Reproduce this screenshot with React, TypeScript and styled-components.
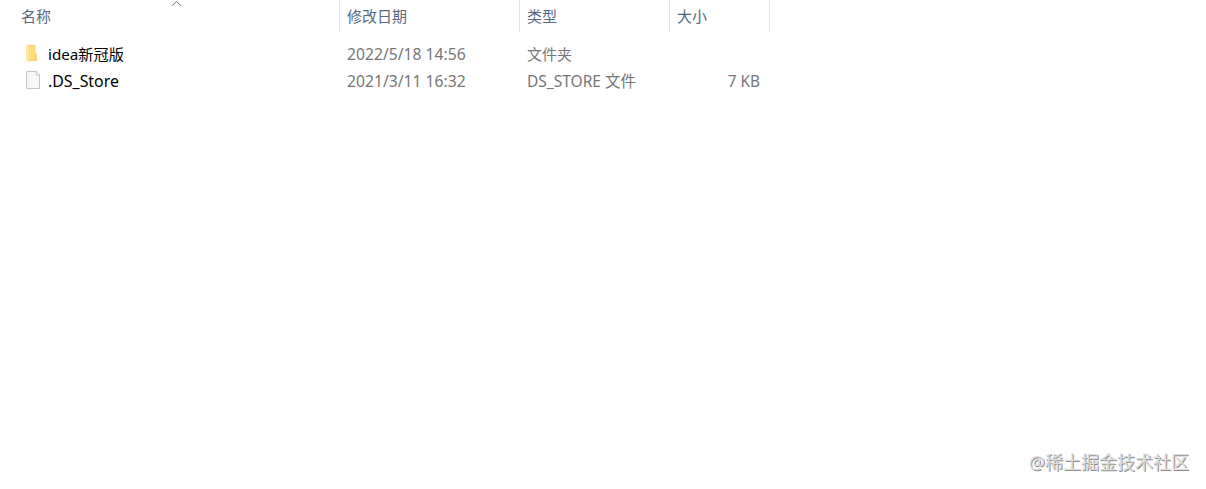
import React from "react";
import styled, { createGlobalStyle } from "styled-components";

const GlobalStyle = createGlobalStyle`
  body {
    margin: 0;
    background: #fff;
    font-family: "Noto Sans", "Noto Sans CJK SC", sans-serif;
    font-size: 15px;
  }
`;

const Page = styled.div`
  display: flex;
  flex-direction: column;
  height: 489px;
  box-sizing: border-box;
  overflow: hidden;
`;

const Row = styled.div`
  display: grid;
  grid-template-columns: 340px 180px 150px 100px;
  height: 27px;
  line-height: 27px;
  color: #767676;
`;

const HeaderRow = styled(Row)`
  height: 32px;
  line-height: 32px;
  margin-bottom: 9px;
  color: #56677f;
`;

const HeaderCell = styled.div<{ $indent?: number }>`
  position: relative;
  box-sizing: border-box;
  padding-left: ${(props) => props.$indent ?? 7}px;
  border-right: 1px solid #e5e5e5;
  white-space: nowrap;
`;

const SortArrow = styled.svg`
  position: absolute;
  top: 0;
  left: 171px;
`;

const Cell = styled.div<{ $size?: number; $right?: boolean }>`
  padding: 0 10px 0 7px;
  font-size: ${(props) => props.$size ?? 15}px;
  text-align: ${(props) => (props.$right ? "right" : "left")};
  white-space: nowrap;
`;

const NameCell = styled.div<{ $size: number }>`
  display: flex;
  gap: 6px;
  padding-left: 24px;
  color: #000;
  font-size: ${(props) => props.$size}px;
  white-space: nowrap;
`;

const Icon = styled.svg`
  flex: none;
  margin-top: 3px;
`;

const Watermark = styled.div`
  margin: auto 17px 13px auto;
  font-size: 18px;
  line-height: 27px;
  color: #dcdcdc;
  text-shadow: 1px 1px 0 #8e8e8e;
`;

const FolderIcon = () => (
  <Icon width="18" height="20" viewBox="0 0 18 20">
    <path d="M2 1h9.5v8l1.5 1v7H4.5L2 16z" fill="#f7d373" />
    <path d="M2 1l3 1.5V18.5L2 16z" fill="#ffe7a0" />
    <path d="M5 2.5h5.5v13.5H5z" fill="#ffdc80" />
  </Icon>
);

const FileIcon = () => (
  <Icon width="18" height="20" viewBox="0 0 18 20">
    <path d="M2.5.5h10l3 3v14h-13z" fill="#f8f8f8" stroke="#c4c4c4" />
    <path d="M12 .5v3.5h3.5" fill="#fff" stroke="#c4c4c4" />
  </Icon>
);

const App = () => {
  return (
    <Page>
      <GlobalStyle />
      <HeaderRow>
        <HeaderCell $indent={21}>
          名称
          <SortArrow width="11" height="8" viewBox="0 0 11 8">
            <path d="M1 5.8L5.5 1.3L10 5.8" fill="none" stroke="#666" />
          </SortArrow>
        </HeaderCell>
        <HeaderCell>修改日期</HeaderCell>
        <HeaderCell>类型</HeaderCell>
        <HeaderCell>大小</HeaderCell>
      </HeaderRow>
      <Row>
        <NameCell $size={15.2}>
          <FolderIcon />
          idea新冠版
        </NameCell>
        <Cell $size={15.7}>2022/5/18 14:56</Cell>
        <Cell>文件夹</Cell>
      </Row>
      <Row>
        <NameCell $size={15.9}>
          <FileIcon />
          .DS_Store
        </NameCell>
        <Cell $size={15.7}>2021/3/11 16:32</Cell>
        <Cell $size={15.5}>DS_STORE 文件</Cell>
        <Cell $size={15.4} $right>
          7 KB
        </Cell>
      </Row>
      <Watermark>@稀土掘金技术社区</Watermark>
    </Page>
  );
};

export default App;
